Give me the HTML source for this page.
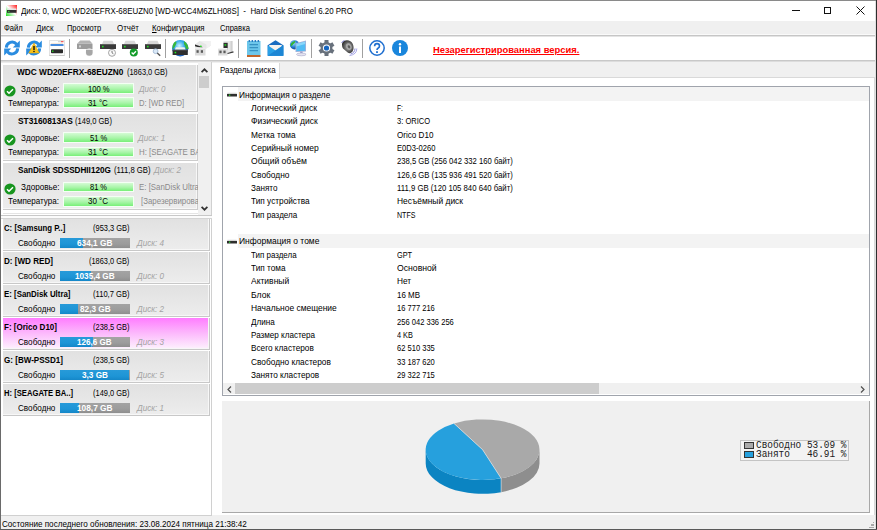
<!DOCTYPE html>
<html><head><meta charset="utf-8">
<style>
html,body{margin:0;padding:0;}
body{width:877px;height:530px;position:relative;overflow:hidden;background:#f0f0f0;font-family:"Liberation Sans",sans-serif;color:#000;}
.a{position:absolute;}
.t{position:absolute;white-space:pre;line-height:0;transform-origin:0 0;color:#000;}
.item{position:absolute;left:3px;width:195px;height:47.5px;background:linear-gradient(#e1e1e1,#ededed);box-sizing:border-box;border-bottom:1px solid #cccccc;border-right:1px solid #cccccc;box-shadow:inset -1px -1px 0 #f7f7f7;}
.vol{position:absolute;left:3px;width:207px;height:31.5px;background:linear-gradient(#e1e1e1,#ededed);box-sizing:border-box;border-bottom:1px solid #c8c8c8;border-right:1px solid #c8c8c8;box-shadow:inset -1px -1px 0 #f7f7f7;}
.gbar{position:absolute;left:63px;width:70.5px;height:10.5px;box-sizing:border-box;border:1px solid #f4fff4;background:linear-gradient(#d4fbd4,#a8f5a8 55%,#78ef78);}
.vbar{position:absolute;left:60px;width:70px;height:10px;background:linear-gradient(#a3a3a3,#9c9c9c 60%,#8e8e8e);}
.vbar i{position:absolute;left:0;top:0;height:10px;background:linear-gradient(#279ad9,#1e95d6 60%,#1587c8);}
.sep{position:absolute;top:39px;width:1px;height:19px;background:#a0a0a0;}
svg{position:absolute;overflow:visible;}
</style></head><body>
<!-- window frame -->
<div class="a" style="left:0;top:0;width:877px;height:1px;background:#8a8a8a"></div>
<div class="a" style="left:0;top:0;width:1px;height:530px;background:#6a6a6a"></div>
<div class="a" style="left:876px;top:0;width:1px;height:530px;background:#2e2e2e"></div>
<div class="a" style="left:875px;top:1px;width:1px;height:528px;background:#e0e0e0"></div>
<div class="a" style="left:0;top:529px;width:877px;height:1px;background:#5a5a5a"></div>
<!-- title bar -->
<div class="a" style="left:1px;top:1px;width:874px;height:20px;background:#fff"></div>
<svg style="left:6px;top:5px" width="11" height="11" viewBox="0 0 11 11">
 <defs><linearGradient id="tg" x1="0" y1="1" x2="1" y2="0"><stop offset="0" stop-color="#22dd22"/><stop offset="0.5" stop-color="#ffffff"/><stop offset="1" stop-color="#ff1a1a"/></linearGradient></defs>
 <rect x="0" y="0" width="11" height="11" fill="url(#tg)"/>
 <path d="M1.5 5 L2.2 3.6 L9.8 3.6 L10.5 5 Z" fill="#e4e4e4"/><rect x="1" y="5" width="9.5" height="2.8" fill="#2e2e2e"/><rect x="2.2" y="5.9" width="1.2" height="1" fill="#3f3"/>
</svg>
<!-- window controls -->
<div class="a" style="left:792px;top:10px;width:8px;height:1px;background:#111"></div>
<div class="a" style="left:824px;top:7px;width:7px;height:7px;border:1px solid #111;box-sizing:border-box"></div>
<svg style="left:856px;top:6px" width="9" height="9" viewBox="0 0 9 9"><path d="M0.5 0.5L8.5 8.5M8.5 0.5L0.5 8.5" stroke="#111" stroke-width="1"/></svg>
<!-- menu bar -->
<div class="a" style="left:1px;top:21px;width:874px;height:13px;background:#f0f0f0"></div>
<div class="a" style="left:1px;top:34px;width:874px;height:1px;background:#fafafa"></div>
<div class="a" style="left:1px;top:35px;width:874px;height:1px;background:#c6c6c6"></div>
<div class="a" style="left:1px;top:36px;width:874px;height:1px;background:#e4e4e4"></div>
<!-- toolbar -->
<div class="a" style="left:1px;top:37px;width:874px;height:23px;background:#fff"></div>
<div class="a" style="left:1px;top:60px;width:874px;height:1px;background:#c8c8c8"></div>
<div class="a" style="left:1px;top:61px;width:874px;height:1px;background:#dcdcdc"></div>
<svg style="left:4px;top:40px" width="16" height="16" viewBox="0 0 16 16"><path d="M2.3 7.6 A5.8 5.8 0 0 1 12.6 4.2" stroke="#2a8ce0" stroke-width="3" fill="none"/><path d="M15.8 0.6 L15.8 7.6 L8.8 7.6 Z" fill="#2a8ce0"/><path d="M13.7 8.4 A5.8 5.8 0 0 1 3.4 11.8" stroke="#2a8ce0" stroke-width="3" fill="none"/><path d="M0.2 15.4 L0.2 8.4 L7.2 8.4 Z" fill="#2a8ce0"/></svg>
<svg style="left:26px;top:40px" width="16" height="16" viewBox="0 0 16 16"><path d="M2.3 7.6 A5.8 5.8 0 0 1 12.6 4.2" stroke="#2a8ce0" stroke-width="3" fill="none"/><path d="M15.8 0.6 L15.8 7.6 L8.8 7.6 Z" fill="#2a8ce0"/><path d="M13.7 8.4 A5.8 5.8 0 0 1 3.4 11.8" stroke="#2a8ce0" stroke-width="3" fill="none"/><path d="M0.2 15.4 L0.2 8.4 L7.2 8.4 Z" fill="#2a8ce0"/><path d="M8 3 L13.2 13 L2.8 13 Z" fill="#f7c21a" stroke="#e0a000" stroke-width="0.5"/><rect x="7.3" y="6" width="1.4" height="4" fill="#111"/><rect x="7.3" y="10.8" width="1.4" height="1.3" fill="#111"/></svg>
<svg style="left:49px;top:40px" width="16" height="16" viewBox="0 0 16 16"><rect x="0.5" y="0.5" width="15" height="15" fill="#fdfdfd" stroke="#e2e2e2"/><rect x="0.5" y="15" width="15" height="1" fill="#c8c8c8"/><rect x="12" y="1.2" width="2.5" height="1" fill="#e33"/><rect x="9" y="1.2" width="3" height="1" fill="#ccc"/><rect x="1.5" y="4.2" width="13" height="1.6" fill="#1a6fd8"/><rect x="2" y="3.4" width="12" height="0.6" fill="#f3d9c0"/><rect x="2" y="9.3" width="12" height="4" rx="0.8" fill="#2a2a2a"/><rect x="3" y="10.6" width="1.5" height="1.3" fill="#1fd01f"/></svg>
<svg style="left:77px;top:40px" width="16" height="16" viewBox="0 0 16 16"><path d="M3.2 0.6 L12.8 0.6 L15.5 3.8 L0 3.8 Z" fill="#b4b4b4"/><rect x="0" y="3.8" width="15.5" height="5.2" fill="#9c9c9c"/><rect x="2" y="5.4" width="2" height="2" fill="#d4d4d4"/><circle cx="12.3" cy="12.4" r="3.9" fill="#f8f8f8"/><path d="M9 9.8 L15.6 9.8 L15.6 12.4 Q15.6 15.6 12.3 15.8 Q9 15.6 9 12.4 Z" fill="#a6a6a6"/></svg>
<svg style="left:100px;top:40px" width="16" height="16" viewBox="0 0 16 16"><path d="M2 4 L3.5 0.8 L12.5 0.8 L14 4 Z" fill="#d8d8d8"/><rect x="0" y="4" width="16" height="5" rx="0.6" fill="#3a3a3a"/><rect x="0.5" y="4" width="15" height="0.8" fill="#6a6a6a"/><rect x="2" y="5.8" width="1.6" height="1.6" fill="#22dd22"/><circle cx="12" cy="12.8" r="3.5" fill="#fafafa" stroke="#9a9a9a" stroke-width="0.9"/><path d="M12 10.8 L12 12.8 L13.4 13.8" stroke="#555" stroke-width="0.8" fill="none"/></svg>
<svg style="left:122px;top:40px" width="16" height="16" viewBox="0 0 16 16"><path d="M2 4 L3.5 0.8 L12.5 0.8 L14 4 Z" fill="#d8d8d8"/><rect x="0" y="4" width="16" height="5" rx="0.6" fill="#3a3a3a"/><rect x="0.5" y="4" width="15" height="0.8" fill="#6a6a6a"/><rect x="2" y="5.8" width="1.6" height="1.6" fill="#22dd22"/><circle cx="11.8" cy="12.5" r="4" fill="#139c29"/><path d="M9.6 12.5 L11.2 14 L14 11.2" stroke="#fff" stroke-width="1.3" fill="none"/></svg>
<svg style="left:145px;top:40px" width="16" height="16" viewBox="0 0 16 16"><path d="M2 4 L3.5 0.8 L12.5 0.8 L14 4 Z" fill="#d8d8d8"/><rect x="0" y="4" width="16" height="5" rx="0.6" fill="#3a3a3a"/><rect x="0.5" y="4" width="15" height="0.8" fill="#6a6a6a"/><rect x="2" y="5.8" width="1.6" height="1.6" fill="#22dd22"/><circle cx="10.6" cy="11.2" r="2.4" fill="#dbe9f7" stroke="#9ab4d0" stroke-width="0.8"/><path d="M12.3 13 L15.2 15.8" stroke="#555" stroke-width="1.4"/></svg>
<svg style="left:172px;top:40px" width="17" height="16" viewBox="0 0 17 16"><defs><radialGradient id="gl" cx="0.45" cy="0.35" r="0.65"><stop offset="0" stop-color="#c8f4ff"/><stop offset="0.5" stop-color="#30a8e8"/><stop offset="1" stop-color="#1a58b8"/></radialGradient></defs><circle cx="8.2" cy="8.3" r="8.2" fill="url(#gl)"/><path d="M0.5 8 Q0.5 3 4 1.2 Q5.5 3.5 3.5 5.5 Q2.5 7 1 9 Z M12 1 Q16.5 4 16.4 9 L14 9 Q13.5 6 12 4 Z" fill="#38b838"/><path d="M2.8 9.8 L3.8 7.2 L12.6 7.2 L13.6 9.8 Z" fill="#f2f2f2"/><rect x="0.6" y="9.8" width="15.2" height="5.2" fill="#2e2e2e"/><rect x="0.6" y="9.8" width="15.2" height="0.7" fill="#5a5a5a"/><rect x="2.6" y="11.8" width="1.6" height="1.5" fill="#2e2"/></svg>
<svg style="left:195px;top:40px" width="16" height="16" viewBox="0 0 16 16"><path d="M0 4.5 L4.5 1 L16 1 L16 5.5 L11.5 8.5 L0 8.5 Z" fill="#e6e6e6"/><path d="M4.5 1 L16 1 L16 5.5 L11.5 8.5 L11.5 4.5 Z" fill="#f2f2f2"/><path d="M0 4.5 L7.5 7 L7.5 8.5 L0 6.2 Z" fill="#2e2e2e"/><rect x="5" y="5.6" width="1.6" height="1.3" fill="#2d2"/><rect x="0" y="7.5" width="10.5" height="8" fill="#dcdcdc"/><rect x="0" y="7.5" width="10.5" height="1.2" fill="#f4f4f4"/><rect x="1.5" y="10.2" width="2.2" height="2.6" fill="#5a5a5a"/><rect x="5.8" y="10.2" width="2.2" height="2.6" fill="#5a5a5a"/></svg>
<svg style="left:218px;top:40px" width="16" height="16" viewBox="0 0 16 16"><rect x="5.5" y="1" width="9" height="11.5" fill="#e8e8e8"/><rect x="12.5" y="1" width="2" height="11.5" fill="#d0d0d0"/><rect x="5.5" y="2.8" width="4.2" height="6.5" fill="#2e2e2e"/><rect x="6.5" y="4.2" width="1.8" height="1.5" fill="#2d2"/><rect x="0" y="8" width="9.5" height="7.5" fill="#dcdcdc"/><rect x="0" y="8" width="9.5" height="1.2" fill="#f4f4f4"/><rect x="1.4" y="10.6" width="2.2" height="2.6" fill="#5a5a5a"/><rect x="5.4" y="10.6" width="2.2" height="2.6" fill="#5a5a5a"/><path d="M9.5 13.5 L15.5 11.8" stroke="#3a3a3a" stroke-width="1.2"/></svg>
<svg style="left:246px;top:40px" width="16" height="17" viewBox="0 0 16 17"><rect x="1" y="1" width="13.5" height="14" fill="#6cc6ea"/><rect x="1" y="15" width="13.5" height="2" fill="#c0652a"/><rect x="2.6" y="0" width="1.5" height="2" fill="#2a7cc0"/><rect x="5.6" y="0" width="1.5" height="2" fill="#2a7cc0"/><rect x="8.6" y="0" width="1.5" height="2" fill="#2a7cc0"/><rect x="11.6" y="0" width="1.5" height="2" fill="#2a7cc0"/><rect x="3.5" y="4.2" width="8.5" height="1" fill="#2a86b8"/><rect x="3.5" y="7.2" width="8.5" height="1" fill="#2a86b8"/><rect x="3.5" y="10.2" width="8.5" height="1" fill="#2a86b8"/></svg>
<svg style="left:267px;top:40px" width="17" height="16" viewBox="0 0 17 16"><path d="M0.7 5.3 L8.5 0.3 L16.3 5.3 L16.3 15.8 L0.7 15.8 Z" fill="#1a6cc0"/><path d="M2.2 5 L14.8 5 L14.8 8.5 L8.5 11 L2.2 8.5 Z" fill="#f6f2ee"/><path d="M0.7 5.3 L8.5 10.5 L16.3 5.3 L16.3 15.8 L0.7 15.8 Z" fill="#2aa0e6"/><path d="M0.7 15.8 L16.3 5.3 L16.3 15.8 Z" fill="#1d86d4"/></svg>
<svg style="left:290px;top:40px" width="17" height="16" viewBox="0 0 17 16"><defs><radialGradient id="g2" cx="0.4" cy="0.35" r="0.7"><stop offset="0" stop-color="#9ae0ff"/><stop offset="0.6" stop-color="#1f78d0"/><stop offset="1" stop-color="#123e90"/></radialGradient></defs><circle cx="4.5" cy="4.8" r="4.6" fill="url(#g2)"/><path d="M1 3.5 Q3 0.5 5.5 1 Q5 3.5 3 4.5 Q2 6 0.5 6.5 Z M5.5 6 Q7.5 5 9 6.5 Q8 9 6 9.2 Z" fill="#32b432"/><path d="M5.5 3.2 L16 0.4 L16 11.5 L5.5 12 Z" fill="#a8b0d8"/><path d="M6.4 4 L15.2 1.6 L15.2 10.8 L6.4 11.2 Z" fill="#52bcf4"/><path d="M6.4 4 L15.2 1.6 L15.2 4 L6.4 6.5 Z" fill="#8ad6fa"/><rect x="10.2" y="11.5" width="2.4" height="2.2" fill="#a0a0c8"/><ellipse cx="11.3" cy="14.4" rx="4.8" ry="1.4" fill="#e4e4f0" stroke="#9898c0" stroke-width="0.5"/></svg>
<svg style="left:318px;top:40px" width="17" height="16" viewBox="0 0 17 16"><g transform="translate(8.5 8)"><rect x="-2" y="-8" width="4" height="4" fill="#68717c" transform="rotate(0)"/><rect x="-2" y="-8" width="4" height="4" fill="#68717c" transform="rotate(60)"/><rect x="-2" y="-8" width="4" height="4" fill="#68717c" transform="rotate(120)"/><rect x="-2" y="-8" width="4" height="4" fill="#68717c" transform="rotate(180)"/><rect x="-2" y="-8" width="4" height="4" fill="#68717c" transform="rotate(240)"/><rect x="-2" y="-8" width="4" height="4" fill="#68717c" transform="rotate(300)"/><circle r="6" fill="#68717c"/><circle r="3.6" fill="#fff"/><circle r="2.6" fill="#1565c0"/></g></svg>
<svg style="left:341px;top:40px" width="16" height="16" viewBox="0 0 16 16"><defs><radialGradient id="sp" cx="0.55" cy="0.5" r="0.55"><stop offset="0" stop-color="#e8e8e8"/><stop offset="0.35" stop-color="#8a8a8a"/><stop offset="1" stop-color="#303030"/></radialGradient></defs><path d="M1 4.5 Q1 1 4.5 0.5 Q9.5 -0.3 11.8 4 Q13.5 8 11.5 11.5 Q9.5 14 7 12.8 L2 8.5 Q1 7 1 4.5 Z" fill="url(#sp)"/><ellipse cx="7.8" cy="6.6" rx="2.6" ry="3.4" transform="rotate(-25 7.8 6.6)" fill="#a8a8a8"/><ellipse cx="8" cy="6.8" rx="1.2" ry="1.7" transform="rotate(-25 8 6.8)" fill="#5a5a5a"/><path d="M0.6 3 Q1.5 0.8 3.5 0.6" stroke="#8888d8" stroke-width="1" fill="none"/><path d="M9.5 14 Q13.8 13 14 8.5" stroke="#8080d0" stroke-width="0.9" fill="none"/><path d="M8.5 15.6 Q15.8 14.5 15.8 8.5" stroke="#a0a0e8" stroke-width="0.9" fill="none"/></svg>
<svg style="left:369px;top:40px" width="16" height="16" viewBox="0 0 16 16"><circle cx="8" cy="8" r="7.2" fill="#fff" stroke="#1f6fd0" stroke-width="1.5"/><path d="M5.6 6.2 Q5.6 3.6 8 3.6 Q10.5 3.6 10.5 6 Q10.5 7.4 9 8.2 Q8 8.8 8 10" stroke="#1f6fd0" stroke-width="1.6" fill="none"/><rect x="7.1" y="11.2" width="1.8" height="1.8" fill="#1f6fd0"/></svg>
<svg style="left:392px;top:40px" width="16" height="16" viewBox="0 0 16 16"><circle cx="8" cy="8" r="8" fill="#1a86dc"/><circle cx="8" cy="4.2" r="1.2" fill="#fff"/><rect x="7" y="6.5" width="2" height="6.5" fill="#fff"/></svg>
<div class="sep" style="left:69px"></div>
<div class="sep" style="left:165px"></div>
<div class="sep" style="left:238px"></div>
<div class="sep" style="left:311px"></div>
<div class="sep" style="left:362px"></div>

<!-- left top panel (disks) -->
<div class="a" style="left:1px;top:62px;width:210px;height:1px;background:#ececec"></div><div class="a" style="left:1px;top:63px;width:210px;height:152px;background:#fff"></div>
<div class="item" style="top:64.5px"></div>
<div class="item" style="top:113.8px"></div>
<div class="item" style="top:163.1px;height:47px"></div>
<div class="gbar" style="top:83px"></div><div class="gbar" style="top:97.4px"></div>
<div class="gbar" style="top:132.3px"></div><div class="gbar" style="top:146.7px"></div>
<div class="gbar" style="top:181.6px"></div><div class="gbar" style="top:196px"></div>
<!-- check icons -->
<svg style="left:4px;top:84.5px" width="12" height="12" viewBox="0 0 12 12"><circle cx="6" cy="6" r="5.6" fill="#17951f"/><path d="M3 6.2L5 8.2L9 4.2" stroke="#fff" stroke-width="1.5" fill="none"/></svg>
<svg style="left:4px;top:133.8px" width="12" height="12" viewBox="0 0 12 12"><circle cx="6" cy="6" r="5.6" fill="#17951f"/><path d="M3 6.2L5 8.2L9 4.2" stroke="#fff" stroke-width="1.5" fill="none"/></svg>
<svg style="left:4px;top:183.1px" width="12" height="12" viewBox="0 0 12 12"><circle cx="6" cy="6" r="5.6" fill="#17951f"/><path d="M3 6.2L5 8.2L9 4.2" stroke="#fff" stroke-width="1.5" fill="none"/></svg>
<!-- scrollbar -->
<div class="a" style="left:198px;top:62px;width:13px;height:153px;background:#f0f0f0"></div>
<svg style="left:201px;top:68px" width="7" height="5" viewBox="0 0 7 5"><path d="M0.6 4.2L3.5 1.3L6.4 4.2" stroke="#333" stroke-width="1.7" fill="none"/></svg>
<div class="a" style="left:199px;top:76px;width:10px;height:12px;background:#cdcdcd"></div>
<svg style="left:201px;top:206px" width="7" height="5" viewBox="0 0 7 5"><path d="M0.6 0.8L3.5 3.7L6.4 0.8" stroke="#333" stroke-width="1.7" fill="none"/></svg>
<div class="a" style="left:211px;top:62px;width:1px;height:454px;background:#d0d0d0"></div>
<!-- splitter -->
<div class="a" style="left:3px;top:213px;width:195px;height:1px;background:#e4e4e4"></div>
<div class="a" style="left:1px;top:215px;width:211px;height:1px;background:#c8c8c8"></div>
<div class="a" style="left:1px;top:216px;width:211px;height:2px;background:#fbfbfb"></div>
<div class="a" style="left:1px;top:218px;width:211px;height:1px;background:#d4d4d4"></div>
<!-- left bottom panel (volumes) -->
<div class="a" style="left:1px;top:219px;width:210px;height:296px;background:#fff"></div>
<div class="a" style="left:1px;top:515px;width:211px;height:1px;background:#d0d0d0"></div>
<div class="vol" style="top:219px"></div>
<div class="vol" style="top:252px"></div>
<div class="vol" style="top:285px"></div>
<div class="vol" style="top:318px;background:linear-gradient(#ff7dff,#fcb4fc 45%,#fdf2fd)"></div>
<div class="vol" style="top:351px"></div>
<div class="vol" style="top:384px"></div>
<div class="vbar" style="top:237.5px"><i style="width:23px"></i></div>
<div class="vbar" style="top:270.5px"><i style="width:31px"></i></div>
<div class="vbar" style="top:303.5px"><i style="width:18px"></i></div>
<div class="vbar" style="top:336.5px"><i style="width:33px"></i></div>
<div class="vbar" style="top:369.5px"><i style="width:69px"></i></div>
<div class="vbar" style="top:402.5px"><i style="width:19px"></i></div>

<!-- right panel -->
<div class="a" style="left:212px;top:62px;width:663px;height:454px;background:#f0f0f0"></div>
<div class="a" style="left:212px;top:78px;width:662px;height:437px;background:#fff"></div>
<div class="a" style="left:874px;top:77px;width:1px;height:438px;background:#d9d9d9"></div>
<div class="a" style="left:280px;top:77px;width:594px;height:1px;background:#d9d9d9"></div>
<div class="a" style="left:212px;top:63px;width:68px;height:16px;background:#fff;border-right:1px solid #d9d9d9;box-sizing:border-box"></div>
<!-- info box -->
<div class="a" style="left:222px;top:86px;width:648px;height:310px;border:1px solid #a0a4ac;box-sizing:border-box;background:#fff"></div>
<div class="a" style="left:237.5px;top:87px;width:631px;height:13.5px;background:#f3f3f3"></div>
<div class="a" style="left:237.5px;top:234px;width:631px;height:13.5px;background:#f3f3f3"></div>
<svg style="left:227px;top:92px" width="10" height="5" viewBox="0 0 10 5"><rect x="0.5" y="0.6" width="9" height="1.3" fill="#e6e6e6"/><rect x="0" y="1.9" width="10" height="2.6" fill="#2e2e2e"/><rect x="2" y="2.5" width="1.3" height="1.4" fill="#2fd02f"/></svg>
<svg style="left:227px;top:239px" width="10" height="5" viewBox="0 0 10 5"><rect x="0.5" y="0.6" width="9" height="1.3" fill="#e6e6e6"/><rect x="0" y="1.9" width="10" height="2.6" fill="#2e2e2e"/><rect x="2" y="2.5" width="1.3" height="1.4" fill="#2fd02f"/></svg>
<!-- h scrollbar -->
<div class="a" style="left:223px;top:383px;width:646px;height:11px;background:#f0f0f0"></div>
<div class="a" style="left:235px;top:383px;width:364px;height:11px;background:#cdcdcd"></div>
<svg style="left:227px;top:385.5px" width="5" height="7" viewBox="0 0 5 7"><path d="M4 0.5L1 3.5L4 6.5" stroke="#505050" stroke-width="1.2" fill="none"/></svg>
<svg style="left:860px;top:385.5px" width="5" height="7" viewBox="0 0 5 7"><path d="M1 0.5L4 3.5L1 6.5" stroke="#505050" stroke-width="1.2" fill="none"/></svg>
<!-- chart panel -->
<div class="a" style="left:222px;top:401px;width:648px;height:112px;background:#f0f0f0;border-right:1px solid #a8a8a8;border-bottom:1px solid #a8a8a8;box-sizing:border-box"></div>
<svg style="left:0;top:0" width="877" height="530"><path d="M539.50 449.70 A56.9 30.3 0 0 1 501.12 478.35 L501.12 492.15 A56.9 30.3 0 0 0 539.50 463.50 Z" fill="#8e8e8e"/><path d="M501.12 478.35 A56.9 30.3 0 0 1 425.70 449.70 L425.70 463.50 A56.9 30.3 0 0 0 501.12 492.15 Z" fill="#0b84c2"/><path d="M482.60 449.70 L501.12 478.35 A56.9 30.3 0 0 1 454.04 423.49 Z" fill="#26a0dd"/><path d="M482.60 449.70 L454.04 423.49 A56.9 30.3 0 1 1 501.12 478.35 Z" fill="#a9a9a9"/><path d="M454.04 423.49 L482.60 449.70 L501.12 478.35 L501.12 492.15" stroke="#e8e8e8" stroke-width="0.6" fill="none"/></svg><div class="a" style="left:740px;top:439.5px;width:109px;height:21px;background:#f3f3f3;border:1px solid #c4c4c4;box-sizing:border-box"></div><div class="a" style="left:743.5px;top:441.8px;width:10px;height:6.8px;background:#a9a9a9;border:1px solid #333;box-sizing:border-box"></div><div class="a" style="left:743.5px;top:451.2px;width:10px;height:6.8px;background:#26a0dd;border:1px solid #333;box-sizing:border-box"></div>
<!-- status bar -->
<div class="a" style="left:1px;top:516px;width:874px;height:13px;background:#f0f0f0"></div>
<div class="a" style="left:873px;top:521.5px;width:1px;height:1.5px;background:#a8a8a8"></div>
<div class="a" style="left:871px;top:524px;width:3px;height:1.5px;background:#a8a8a8"></div>
<div class="a" style="left:869px;top:526.5px;width:5px;height:1.5px;background:#a8a8a8"></div>
<span class="t" id="t0" style="left:21.00px;top:10.78px;font-size:9.0px;font-family:'Liberation Sans', sans-serif;transform:scaleX(0.8803);">Диск: 0, WDC WD20EFRX-68EUZN0 [WD-WCC4M6ZLH08S]  -  Hard Disk Sentinel 6.20 PRO</span>
<span class="t" id="t1" style="left:4.20px;top:28.48px;font-size:9.0px;font-family:'Liberation Sans', sans-serif;transform:scaleX(0.8491);">Файл</span>
<span class="t" id="t2" style="left:36.30px;top:28.48px;font-size:9.0px;font-family:'Liberation Sans', sans-serif;transform:scaleX(0.8895);">Диск</span>
<span class="t" id="t3" style="left:66.70px;top:28.48px;font-size:9.0px;font-family:'Liberation Sans', sans-serif;transform:scaleX(0.8295);">Просмотр</span>
<span class="t" id="t4" style="left:116.80px;top:28.48px;font-size:9.0px;font-family:'Liberation Sans', sans-serif;transform:scaleX(0.8776);">Отчёт</span>
<span class="t" id="t5" style="left:152.40px;top:28.48px;font-size:9.0px;font-family:'Liberation Sans', sans-serif;transform:scaleX(0.8691);"><u>К</u>онфигурация</span>
<span class="t" id="t6" style="left:219.50px;top:28.48px;font-size:9.0px;font-family:'Liberation Sans', sans-serif;transform:scaleX(0.8467);">Справка</span>
<span class="t" id="t7" style="left:432.50px;top:50.27px;font-size:9.6px;font-family:'Liberation Sans', sans-serif;font-weight:bold;color:#ff0000;text-decoration:underline;transform:scaleX(0.9785);">Незарегистрированная версия.</span>
<span class="t" id="t8" style="left:17.10px;top:71.68px;font-size:9.0px;font-family:'Liberation Sans', sans-serif;font-weight:bold;transform:scaleX(0.9202);">WDC WD20EFRX-68EUZN0</span>
<span class="t" id="t9" style="left:126.80px;top:71.68px;font-size:9.0px;font-family:'Liberation Sans', sans-serif;transform:scaleX(0.8260);">(1863,0 GB)</span>
<span class="t" id="t10" style="left:20.80px;top:88.78px;font-size:9.0px;font-family:'Liberation Sans', sans-serif;transform:scaleX(0.9019);">Здоровье:</span>
<span class="t" id="t11" style="left:88.30px;top:88.78px;font-size:9.0px;font-family:'Liberation Sans', sans-serif;transform:scaleX(0.8460);">100 %</span>
<span class="t" id="t12" style="left:138.50px;top:88.78px;font-size:9.0px;font-family:'Liberation Sans', sans-serif;font-style:italic;color:#a3a3a3;transform:scaleX(0.8801);">Диск: 0</span>
<span class="t" id="t13" style="left:8.30px;top:102.78px;font-size:9.0px;font-family:'Liberation Sans', sans-serif;transform:scaleX(0.8945);">Температура:</span>
<span class="t" id="t14" style="left:88.30px;top:102.78px;font-size:9.0px;font-family:'Liberation Sans', sans-serif;transform:scaleX(0.8707);">31 °C</span>
<div style="position:absolute;left:0;top:0;width:198px;height:530px;overflow:hidden"><span class="t" id="t15" style="left:139.00px;top:102.78px;font-size:9.0px;font-family:'Liberation Sans', sans-serif;color:#8a8a8a;transform:scaleX(0.8509);">D: [WD RED]</span></div>
<span class="t" id="t16" style="left:17.80px;top:120.98px;font-size:9.0px;font-family:'Liberation Sans', sans-serif;font-weight:bold;transform:scaleX(0.9264);">ST3160813AS</span>
<span class="t" id="t17" style="left:75.30px;top:120.98px;font-size:9.0px;font-family:'Liberation Sans', sans-serif;transform:scaleX(0.8380);">(149,0 GB)</span>
<span class="t" id="t18" style="left:20.80px;top:138.08px;font-size:9.0px;font-family:'Liberation Sans', sans-serif;transform:scaleX(0.9019);">Здоровье:</span>
<span class="t" id="t19" style="left:90.00px;top:138.08px;font-size:9.0px;font-family:'Liberation Sans', sans-serif;transform:scaleX(0.8384);">51 %</span>
<span class="t" id="t20" style="left:137.50px;top:138.08px;font-size:9.0px;font-family:'Liberation Sans', sans-serif;font-style:italic;color:#a3a3a3;transform:scaleX(0.9034);">Диск: 1</span>
<span class="t" id="t21" style="left:8.30px;top:152.08px;font-size:9.0px;font-family:'Liberation Sans', sans-serif;transform:scaleX(0.8945);">Температура:</span>
<span class="t" id="t22" style="left:87.80px;top:152.08px;font-size:9.0px;font-family:'Liberation Sans', sans-serif;transform:scaleX(0.8884);">31 °C</span>
<div style="position:absolute;left:0;top:0;width:198px;height:530px;overflow:hidden"><span class="t" id="t23" style="left:138.70px;top:152.08px;font-size:9.0px;font-family:'Liberation Sans', sans-serif;color:#8a8a8a;transform:scaleX(0.8750);">H: [SEAGATE BA..]</span></div>
<span class="t" id="t24" style="left:17.60px;top:170.28px;font-size:9.0px;font-family:'Liberation Sans', sans-serif;font-weight:bold;transform:scaleX(0.9050);">SanDisk SDSSDHII120G</span>
<span class="t" id="t25" style="left:114.00px;top:170.28px;font-size:9.0px;font-family:'Liberation Sans', sans-serif;transform:scaleX(0.8551);">(111,8 GB)</span>
<span class="t" id="t26" style="left:153.50px;top:170.28px;font-size:9.0px;font-family:'Liberation Sans', sans-serif;font-style:italic;color:#a3a3a3;transform:scaleX(0.9001);">Диск: 2</span>
<span class="t" id="t27" style="left:20.80px;top:187.38px;font-size:9.0px;font-family:'Liberation Sans', sans-serif;transform:scaleX(0.9019);">Здоровье:</span>
<span class="t" id="t28" style="left:89.50px;top:187.38px;font-size:9.0px;font-family:'Liberation Sans', sans-serif;transform:scaleX(0.8286);">81 %</span>
<div style="position:absolute;left:0;top:0;width:198px;height:530px;overflow:hidden"><span class="t" id="t29" style="left:138.70px;top:187.38px;font-size:9.0px;font-family:'Liberation Sans', sans-serif;color:#8a8a8a;transform:scaleX(0.8750);">E: [SanDisk Ultra]</span></div>
<span class="t" id="t30" style="left:8.30px;top:201.38px;font-size:9.0px;font-family:'Liberation Sans', sans-serif;transform:scaleX(0.8945);">Температура:</span>
<span class="t" id="t31" style="left:87.80px;top:201.38px;font-size:9.0px;font-family:'Liberation Sans', sans-serif;transform:scaleX(0.8884);">30 °C</span>
<div style="position:absolute;left:0;top:0;width:198px;height:530px;overflow:hidden"><span class="t" id="t32" style="left:140.50px;top:201.38px;font-size:9.0px;font-family:'Liberation Sans', sans-serif;color:#8a8a8a;transform:scaleX(0.8750);">[Зарезервировано системой]</span></div>
<span class="t" id="t33" style="left:4.20px;top:227.78px;font-size:9.0px;font-family:'Liberation Sans', sans-serif;font-weight:bold;transform:scaleX(0.8651);">C: [Samsung P..]</span>
<span class="t" id="t34" style="left:92.70px;top:227.78px;font-size:9.0px;font-family:'Liberation Sans', sans-serif;transform:scaleX(0.8312);">(953,3 GB)</span>
<span class="t" id="t35" style="left:17.80px;top:243.08px;font-size:9.0px;font-family:'Liberation Sans', sans-serif;transform:scaleX(0.9039);">Свободно</span>
<span class="t" id="t36" style="left:76.60px;top:242.88px;font-size:9.0px;font-family:'Liberation Sans', sans-serif;font-weight:bold;color:#ffffff;transform:scaleX(0.9187);">634,1 GB</span>
<span class="t" id="t37" style="left:136.70px;top:243.08px;font-size:9.0px;font-family:'Liberation Sans', sans-serif;font-style:italic;color:#a3a3a3;transform:scaleX(0.9001);">Диск: 4</span>
<span class="t" id="t38" style="left:4.20px;top:260.78px;font-size:9.0px;font-family:'Liberation Sans', sans-serif;font-weight:bold;transform:scaleX(0.8991);">D: [WD RED]</span>
<span class="t" id="t39" style="left:89.00px;top:260.78px;font-size:9.0px;font-family:'Liberation Sans', sans-serif;transform:scaleX(0.8219);">(1863,0 GB)</span>
<span class="t" id="t40" style="left:17.80px;top:276.08px;font-size:9.0px;font-family:'Liberation Sans', sans-serif;transform:scaleX(0.9039);">Свободно</span>
<span class="t" id="t41" style="left:75.30px;top:275.88px;font-size:9.0px;font-family:'Liberation Sans', sans-serif;font-weight:bold;color:#ffffff;transform:scaleX(0.9097);">1035,4 GB</span>
<span class="t" id="t42" style="left:136.70px;top:276.08px;font-size:9.0px;font-family:'Liberation Sans', sans-serif;font-style:italic;color:#a3a3a3;transform:scaleX(0.9001);">Диск: 0</span>
<span class="t" id="t43" style="left:4.20px;top:293.78px;font-size:9.0px;font-family:'Liberation Sans', sans-serif;font-weight:bold;transform:scaleX(0.8746);">E: [SanDisk Ultra]</span>
<span class="t" id="t44" style="left:92.80px;top:293.78px;font-size:9.0px;font-family:'Liberation Sans', sans-serif;transform:scaleX(0.8418);">(110,7 GB)</span>
<span class="t" id="t45" style="left:17.80px;top:309.08px;font-size:9.0px;font-family:'Liberation Sans', sans-serif;transform:scaleX(0.9039);">Свободно</span>
<span class="t" id="t46" style="left:79.80px;top:308.88px;font-size:9.0px;font-family:'Liberation Sans', sans-serif;font-weight:bold;color:#ffffff;transform:scaleX(0.9126);">82,3 GB</span>
<span class="t" id="t47" style="left:136.70px;top:309.08px;font-size:9.0px;font-family:'Liberation Sans', sans-serif;font-style:italic;color:#a3a3a3;transform:scaleX(0.9001);">Диск: 2</span>
<span class="t" id="t48" style="left:4.20px;top:326.78px;font-size:9.0px;font-family:'Liberation Sans', sans-serif;font-weight:bold;transform:scaleX(0.8905);">F: [Orico D10]</span>
<span class="t" id="t49" style="left:92.80px;top:326.78px;font-size:9.0px;font-family:'Liberation Sans', sans-serif;transform:scaleX(0.8290);">(238,5 GB)</span>
<span class="t" id="t50" style="left:17.80px;top:342.08px;font-size:9.0px;font-family:'Liberation Sans', sans-serif;transform:scaleX(0.9039);">Свободно</span>
<span class="t" id="t51" style="left:77.40px;top:341.88px;font-size:9.0px;font-family:'Liberation Sans', sans-serif;font-weight:bold;color:#ffffff;transform:scaleX(0.8980);">126,6 GB</span>
<span class="t" id="t52" style="left:136.70px;top:342.08px;font-size:9.0px;font-family:'Liberation Sans', sans-serif;font-style:italic;color:#a3a3a3;transform:scaleX(0.9001);">Диск: 3</span>
<span class="t" id="t53" style="left:4.20px;top:359.78px;font-size:9.0px;font-family:'Liberation Sans', sans-serif;font-weight:bold;transform:scaleX(0.8963);">G: [BW-PSSD1]</span>
<span class="t" id="t54" style="left:92.80px;top:359.78px;font-size:9.0px;font-family:'Liberation Sans', sans-serif;transform:scaleX(0.8290);">(238,5 GB)</span>
<span class="t" id="t55" style="left:17.80px;top:375.08px;font-size:9.0px;font-family:'Liberation Sans', sans-serif;transform:scaleX(0.9039);">Свободно</span>
<span class="t" id="t56" style="left:81.50px;top:374.88px;font-size:9.0px;font-family:'Liberation Sans', sans-serif;font-weight:bold;color:#ffffff;transform:scaleX(0.9083);">3,3 GB</span>
<span class="t" id="t57" style="left:136.70px;top:375.08px;font-size:9.0px;font-family:'Liberation Sans', sans-serif;font-style:italic;color:#a3a3a3;transform:scaleX(0.9001);">Диск: 5</span>
<span class="t" id="t58" style="left:4.20px;top:392.78px;font-size:9.0px;font-family:'Liberation Sans', sans-serif;font-weight:bold;transform:scaleX(0.8495);">H: [SEAGATE BA..]</span>
<span class="t" id="t59" style="left:92.80px;top:392.78px;font-size:9.0px;font-family:'Liberation Sans', sans-serif;transform:scaleX(0.8290);">(149,0 GB)</span>
<span class="t" id="t60" style="left:17.80px;top:408.08px;font-size:9.0px;font-family:'Liberation Sans', sans-serif;transform:scaleX(0.9039);">Свободно</span>
<span class="t" id="t61" style="left:76.50px;top:407.88px;font-size:9.0px;font-family:'Liberation Sans', sans-serif;font-weight:bold;color:#ffffff;transform:scaleX(0.9239);">108,7 GB</span>
<span class="t" id="t62" style="left:136.70px;top:408.08px;font-size:9.0px;font-family:'Liberation Sans', sans-serif;font-style:italic;color:#a3a3a3;transform:scaleX(0.9001);">Диск: 1</span>
<span class="t" id="t63" style="left:219.60px;top:69.58px;font-size:9.0px;font-family:'Liberation Sans', sans-serif;transform:scaleX(0.8876);">Разделы диска</span>
<span class="t" id="t64" style="left:238.90px;top:94.58px;font-size:9.0px;font-family:'Liberation Sans', sans-serif;transform:scaleX(0.9206);">Информация о разделе</span>
<span class="t" id="t65" style="left:250.50px;top:107.93px;font-size:9.0px;font-family:'Liberation Sans', sans-serif;transform:scaleX(0.9617);">Логический диск</span>
<span class="t" id="t66" style="left:396.50px;top:107.93px;font-size:9.0px;font-family:'Liberation Sans', sans-serif;transform:scaleX(0.7500);">F:</span>
<span class="t" id="t67" style="left:250.50px;top:121.28px;font-size:9.0px;font-family:'Liberation Sans', sans-serif;transform:scaleX(0.9469);">Физический диск</span>
<span class="t" id="t68" style="left:396.50px;top:121.28px;font-size:9.0px;font-family:'Liberation Sans', sans-serif;transform:scaleX(0.8376);">3: ORICO</span>
<span class="t" id="t69" style="left:250.50px;top:134.63px;font-size:9.0px;font-family:'Liberation Sans', sans-serif;transform:scaleX(0.9255);">Метка тома</span>
<span class="t" id="t70" style="left:396.50px;top:134.63px;font-size:9.0px;font-family:'Liberation Sans', sans-serif;transform:scaleX(0.9009);">Orico D10</span>
<span class="t" id="t71" style="left:250.50px;top:147.98px;font-size:9.0px;font-family:'Liberation Sans', sans-serif;transform:scaleX(0.9454);">Серийный номер</span>
<span class="t" id="t72" style="left:396.50px;top:147.98px;font-size:9.0px;font-family:'Liberation Sans', sans-serif;transform:scaleX(0.8431);">E0D3-0260</span>
<span class="t" id="t73" style="left:250.50px;top:161.33px;font-size:9.0px;font-family:'Liberation Sans', sans-serif;transform:scaleX(0.9524);">Общий объём</span>
<span class="t" id="t74" style="left:396.50px;top:161.33px;font-size:9.0px;font-family:'Liberation Sans', sans-serif;transform:scaleX(0.8533);">238,5 GB (256 042 332 160 байт)</span>
<span class="t" id="t75" style="left:250.50px;top:174.68px;font-size:9.0px;font-family:'Liberation Sans', sans-serif;transform:scaleX(0.9281);">Свободно</span>
<span class="t" id="t76" style="left:396.50px;top:174.68px;font-size:9.0px;font-family:'Liberation Sans', sans-serif;transform:scaleX(0.8533);">126,6 GB (135 936 491 520 байт)</span>
<span class="t" id="t77" style="left:250.50px;top:188.03px;font-size:9.0px;font-family:'Liberation Sans', sans-serif;transform:scaleX(0.9006);">Занято</span>
<span class="t" id="t78" style="left:396.50px;top:188.03px;font-size:9.0px;font-family:'Liberation Sans', sans-serif;transform:scaleX(0.8619);">111,9 GB (120 105 840 640 байт)</span>
<span class="t" id="t79" style="left:250.50px;top:201.38px;font-size:9.0px;font-family:'Liberation Sans', sans-serif;transform:scaleX(0.9190);">Тип устройства</span>
<span class="t" id="t80" style="left:396.50px;top:201.38px;font-size:9.0px;font-family:'Liberation Sans', sans-serif;transform:scaleX(0.9360);">Несъёмный диск</span>
<span class="t" id="t81" style="left:250.50px;top:214.73px;font-size:9.0px;font-family:'Liberation Sans', sans-serif;transform:scaleX(0.8979);">Тип раздела</span>
<span class="t" id="t82" style="left:396.50px;top:214.73px;font-size:9.0px;font-family:'Liberation Sans', sans-serif;transform:scaleX(0.7872);">NTFS</span>
<span class="t" id="t83" style="left:238.90px;top:241.43px;font-size:9.0px;font-family:'Liberation Sans', sans-serif;transform:scaleX(0.9421);">Информация о томе</span>
<span class="t" id="t84" style="left:250.50px;top:254.78px;font-size:9.0px;font-family:'Liberation Sans', sans-serif;transform:scaleX(0.8844);">Тип раздела</span>
<span class="t" id="t85" style="left:396.50px;top:254.78px;font-size:9.0px;font-family:'Liberation Sans', sans-serif;transform:scaleX(0.8155);">GPT</span>
<span class="t" id="t86" style="left:250.50px;top:268.13px;font-size:9.0px;font-family:'Liberation Sans', sans-serif;transform:scaleX(0.9143);">Тип тома</span>
<span class="t" id="t87" style="left:396.50px;top:268.13px;font-size:9.0px;font-family:'Liberation Sans', sans-serif;transform:scaleX(0.9621);">Основной</span>
<span class="t" id="t88" style="left:250.50px;top:281.48px;font-size:9.0px;font-family:'Liberation Sans', sans-serif;transform:scaleX(0.9443);">Активный</span>
<span class="t" id="t89" style="left:396.50px;top:281.48px;font-size:9.0px;font-family:'Liberation Sans', sans-serif;transform:scaleX(0.9199);">Нет</span>
<span class="t" id="t90" style="left:250.50px;top:294.83px;font-size:9.0px;font-family:'Liberation Sans', sans-serif;transform:scaleX(0.9548);">Блок</span>
<span class="t" id="t91" style="left:396.50px;top:294.83px;font-size:9.0px;font-family:'Liberation Sans', sans-serif;transform:scaleX(0.8879);">16 MB</span>
<span class="t" id="t92" style="left:250.50px;top:308.18px;font-size:9.0px;font-family:'Liberation Sans', sans-serif;transform:scaleX(0.9383);">Начальное смещение</span>
<span class="t" id="t93" style="left:396.50px;top:308.18px;font-size:9.0px;font-family:'Liberation Sans', sans-serif;transform:scaleX(0.8391);">16 777 216</span>
<span class="t" id="t94" style="left:250.50px;top:321.53px;font-size:9.0px;font-family:'Liberation Sans', sans-serif;transform:scaleX(0.9067);">Длина</span>
<span class="t" id="t95" style="left:396.50px;top:321.53px;font-size:9.0px;font-family:'Liberation Sans', sans-serif;transform:scaleX(0.8405);">256 042 336 256</span>
<span class="t" id="t96" style="left:250.50px;top:334.88px;font-size:9.0px;font-family:'Liberation Sans', sans-serif;transform:scaleX(0.8993);">Размер кластера</span>
<span class="t" id="t97" style="left:396.50px;top:334.88px;font-size:9.0px;font-family:'Liberation Sans', sans-serif;transform:scaleX(0.8147);">4 KB</span>
<span class="t" id="t98" style="left:250.50px;top:348.23px;font-size:9.0px;font-family:'Liberation Sans', sans-serif;transform:scaleX(0.9139);">Всего кластеров</span>
<span class="t" id="t99" style="left:396.50px;top:348.23px;font-size:9.0px;font-family:'Liberation Sans', sans-serif;transform:scaleX(0.8391);">62 510 335</span>
<span class="t" id="t100" style="left:250.50px;top:361.58px;font-size:9.0px;font-family:'Liberation Sans', sans-serif;transform:scaleX(0.9237);">Свободно кластеров</span>
<span class="t" id="t101" style="left:396.50px;top:361.58px;font-size:9.0px;font-family:'Liberation Sans', sans-serif;transform:scaleX(0.8391);">33 187 620</span>
<span class="t" id="t102" style="left:250.50px;top:374.93px;font-size:9.0px;font-family:'Liberation Sans', sans-serif;transform:scaleX(0.9149);">Занято кластеров</span>
<span class="t" id="t103" style="left:396.50px;top:374.93px;font-size:9.0px;font-family:'Liberation Sans', sans-serif;transform:scaleX(0.8391);">29 322 715</span>
<span class="t" id="t104" style="left:2.20px;top:523.57px;font-size:9.9px;font-family:'Liberation Sans', sans-serif;transform:scaleX(0.8214);">Состояние последнего обновления: 23.08.2024 пятница 21:38:42</span>
<span class="t" id="t105" style="left:756.00px;top:445.20px;font-size:10.4px;font-family:'Liberation Mono', monospace;color:#202020;transform:scaleX(0.9070);">Свободно 53.09 %</span>
<span class="t" id="t106" style="left:756.00px;top:454.40px;font-size:10.4px;font-family:'Liberation Mono', monospace;color:#202020;transform:scaleX(0.9070);">Занято   46.91 %</span>
</body></html>
